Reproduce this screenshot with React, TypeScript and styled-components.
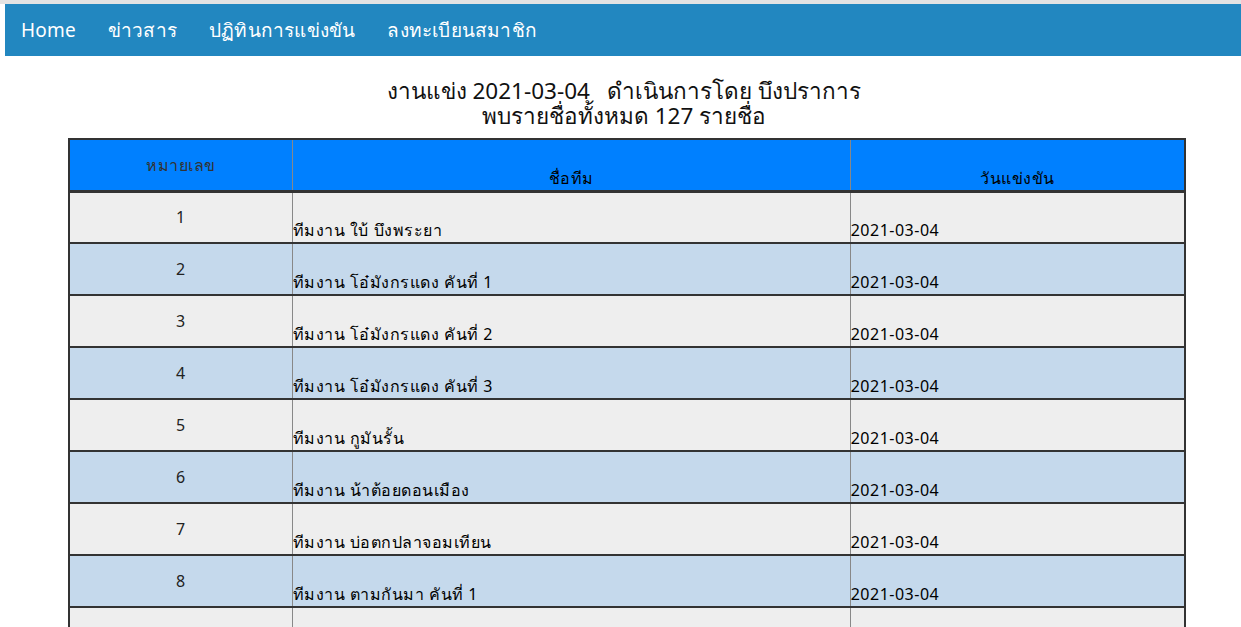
import React from 'react';
import styled, { createGlobalStyle } from 'styled-components';

const GlobalStyle = createGlobalStyle`
  html, body {
    margin: 0;
    padding: 0;
    background: #ffffff;
    overflow: hidden;
  }
  body {
    font-family: Tahoma, "Noto Sans", "DejaVu Sans", sans-serif;
    border-top: 4px solid #e3e3e3;
  }
`;

const Page = styled.div`
  padding-left: 5px;
`;

const NavBar = styled.nav`
  display: flex;
  align-items: center;
  gap: 32px;
  height: 52px;
  padding: 0 16px;
  background: #2287c0;
`;

const NavLink = styled.a`
  color: #ffffff;
  font-size: 19px;
  text-decoration: none;
  letter-spacing: 0.2px;
`;

const Heading = styled.h2`
  margin: 22px 0 10px;
  text-align: center;
  font-size: 22.5px;
  font-weight: normal;
  line-height: 25px;
  color: #111;
  padding-left: 2px;
`;

const Table = styled.table`
  width: 1118px;
  margin-left: 63px;
  border-collapse: collapse;
  font-size: 16px;
  letter-spacing: 0.5px;
  border-left: 2px solid #333;
  border-right: 2px solid #333;
`;

const HeadRow = styled.tr`
  height: 52px;
  background: #0080ff;
  border-top: 2px solid #333;
  border-bottom: 3px solid #333;
`;

const HeadCell = styled.th<{ $middle?: boolean; $w: string }>`
  width: ${p => p.$w};
  padding: 0;
  font-weight: normal;
  text-align: center;
  vertical-align: ${p => (p.$middle ? 'middle' : 'bottom')};
  color: ${p => (p.$middle ? '#333' : '#000')};
  border-left: 1px solid #888;
  line-height: 20px;
  padding-bottom: ${p => (p.$middle ? '0' : '2px')};
`;

const Row = styled.tr<{ $alt: boolean }>`
  height: 52px;
  background: ${p => (p.$alt ? '#c5d9ec' : '#eeeeee')};
  border-bottom: 2px solid #333;
`;

const NumCell = styled.td`
  padding: 0;
  text-align: center;
  vertical-align: middle;
  color: #222;
`;

const TextCell = styled.td`
  padding: 0 0 2px;
  text-align: left;
  vertical-align: bottom;
  color: #000;
  border-left: 1px solid #888;
  line-height: 20px;
`;

const teams = [
  'ทีมงาน ใบ้ บึงพระยา',
  'ทีมงาน โอ๋มังกรแดง คันที่ 1',
  'ทีมงาน โอ๋มังกรแดง คันที่ 2',
  'ทีมงาน โอ๋มังกรแดง คันที่ 3',
  'ทีมงาน กูมันรั้น',
  'ทีมงาน น้าต้อยดอนเมือง',
  'ทีมงาน บ่อตกปลาจอมเทียน',
  'ทีมงาน ตามกันมา คันที่ 1',
  'ทีมงาน ตามกันมา คันที่ 2',
  'ทีมงาน ตามกันมา คันที่ 3',
];

export default function App() {
  return (
    <Page>
      <GlobalStyle />
      <NavBar>
        <NavLink href="#">Home</NavLink>
        <NavLink href="#">ข่าวสาร</NavLink>
        <NavLink href="#">ปฏิทินการแข่งขัน</NavLink>
        <NavLink href="#">ลงทะเบียนสมาชิก</NavLink>
      </NavBar>

      <Heading>
        งานแข่ง 2021-03-04&nbsp;&nbsp; ดำเนินการโดย บึงปราการ
        <br />
        พบรายชื่อทั้งหมด 127 รายชื่อ
      </Heading>

      <Table>
        <thead>
          <HeadRow>
            <HeadCell $middle $w="20%">หมายเลข</HeadCell>
            <HeadCell $w="50%">ชื่อทีม</HeadCell>
            <HeadCell $w="30%">วันแข่งขัน</HeadCell>
          </HeadRow>
        </thead>
        <tbody>
          {teams.map((name, i) => (
            <Row key={i} $alt={i % 2 === 1}>
              <NumCell>{i + 1}</NumCell>
              <TextCell>{name}</TextCell>
              <TextCell>2021-03-04</TextCell>
            </Row>
          ))}
        </tbody>
      </Table>
    </Page>
  );
}
